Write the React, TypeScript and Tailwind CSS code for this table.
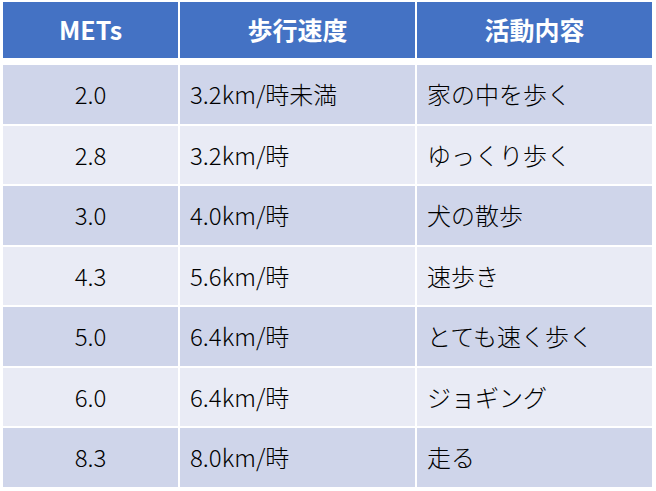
import React from "react";

const rows = [
  { mets: "2.0", speed: "3.2km/時未満", act: "家の中を歩く" },
  { mets: "2.8", speed: "3.2km/時", act: "ゆっくり歩く" },
  { mets: "3.0", speed: "4.0km/時", act: "犬の散歩" },
  { mets: "4.3", speed: "5.6km/時", act: "速歩き" },
  { mets: "5.0", speed: "6.4km/時", act: "とても速く歩く" },
  { mets: "6.0", speed: "6.4km/時", act: "ジョギング" },
  { mets: "8.3", speed: "8.0km/時", act: "走る" },
];

const App = () => {
  return (
    <div
      className="w-[656px] h-[491px] bg-white pt-[2px] pl-[3px]"
      style={{ fontFamily: '"Noto Sans CJK JP", "Noto Sans", sans-serif' }}
    >
      {/* header */}
      <div className="grid grid-cols-[175px_235px_235px] gap-x-[2px] h-[56px] text-white font-bold text-[25px]">
        <div className="bg-[#4472c4] flex items-center justify-center">METs</div>
        <div className="bg-[#4472c4] flex items-center justify-center">歩行速度</div>
        <div className="bg-[#4472c4] flex items-center justify-center">活動内容</div>
      </div>

      {/* body */}
      <div className="mt-[7px] flex flex-col gap-y-[2px] text-[24px] font-light text-black">
        {rows.map((r, i) => {
          const bg = i % 2 === 0 ? "bg-[#cfd5ea]" : "bg-[#e9ebf5]";
          return (
            <div key={i} className="grid grid-cols-[175px_235px_235px] gap-x-[2px] h-[58.5px]">
              <div className={`${bg} flex items-center justify-center`}>{r.mets}</div>
              <div className={`${bg} flex items-center pl-[10px]`}>{r.speed}</div>
              <div className={`${bg} flex items-center pl-[10px]`}>{r.act}</div>
            </div>
          );
        })}
      </div>
    </div>
  );
};

export default App;
